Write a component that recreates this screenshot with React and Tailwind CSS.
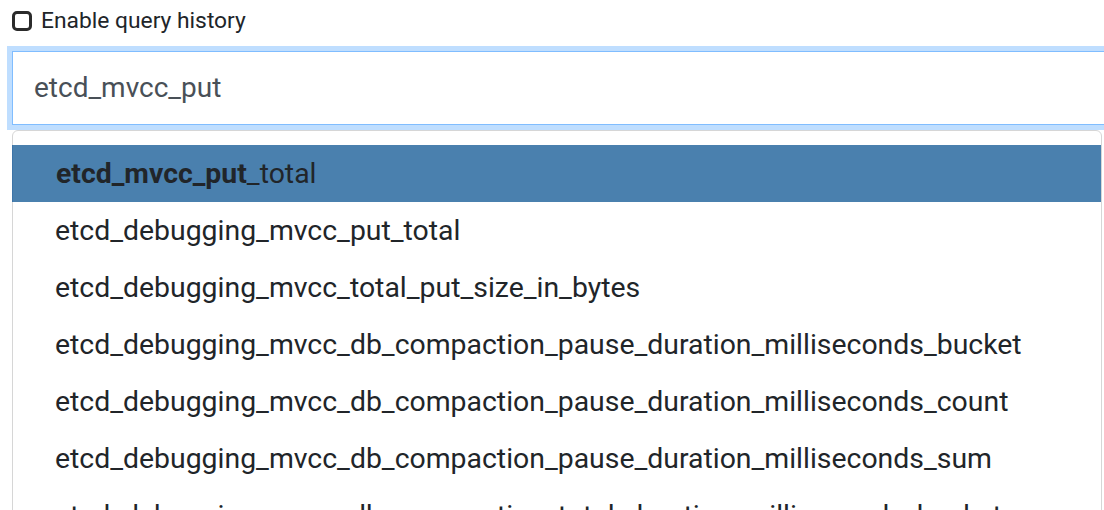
const items = [
  'etcd_debugging_mvcc_put_total',
  'etcd_debugging_mvcc_total_put_size_in_bytes',
  'etcd_debugging_mvcc_db_compaction_pause_duration_milliseconds_bucket',
  'etcd_debugging_mvcc_db_compaction_pause_duration_milliseconds_count',
  'etcd_debugging_mvcc_db_compaction_pause_duration_milliseconds_sum',
  'etcd_debugging_mvcc_db_compaction_total_duration_milliseconds_bucket',
];

export default function App() {
  return (
    <div className="w-[1104px] h-[510px] overflow-hidden bg-white text-[#212529] font-['Roboto',sans-serif]">
      <label className="flex items-center gap-[9px] pl-[12px] pt-[4px] h-[38px]">
        <span className="w-[20px] h-[20px] rounded-[5px] border-[3px] border-[#2b2b2b] bg-white shrink-0" />
        <span className="text-[22.8px] leading-none">Enable query history</span>
      </label>
      <div className="relative pl-[12px] mt-[13px]">
        <div className="w-[1120px] h-[74px] border border-[#80bdff] shadow-[0_0_0_5px_rgba(0,123,255,0.25)] bg-white flex items-center pl-[21px] text-[28px] text-[#495057]">
          etcd_mvcc_put
        </div>
        <div className="mt-[5px] w-[1090px] bg-white border border-[#d6d6d6] rounded-[6px] pt-[14px]">
          <div className="h-[57px] flex items-center pt-[1px] pl-[43px] bg-[#4a80ae] text-[28.4px] border-l border-[#3d74a8] -ml-px">
            <span className="font-bold">etcd_mvcc_put</span>
            <span>_total</span>
          </div>
          {items.map((t) => (
            <div key={t} className="h-[57px] flex items-center pt-[1px] pl-[42px] text-[28.4px]">
              {t}
            </div>
          ))}
        </div>
      </div>
    </div>
  );
}
